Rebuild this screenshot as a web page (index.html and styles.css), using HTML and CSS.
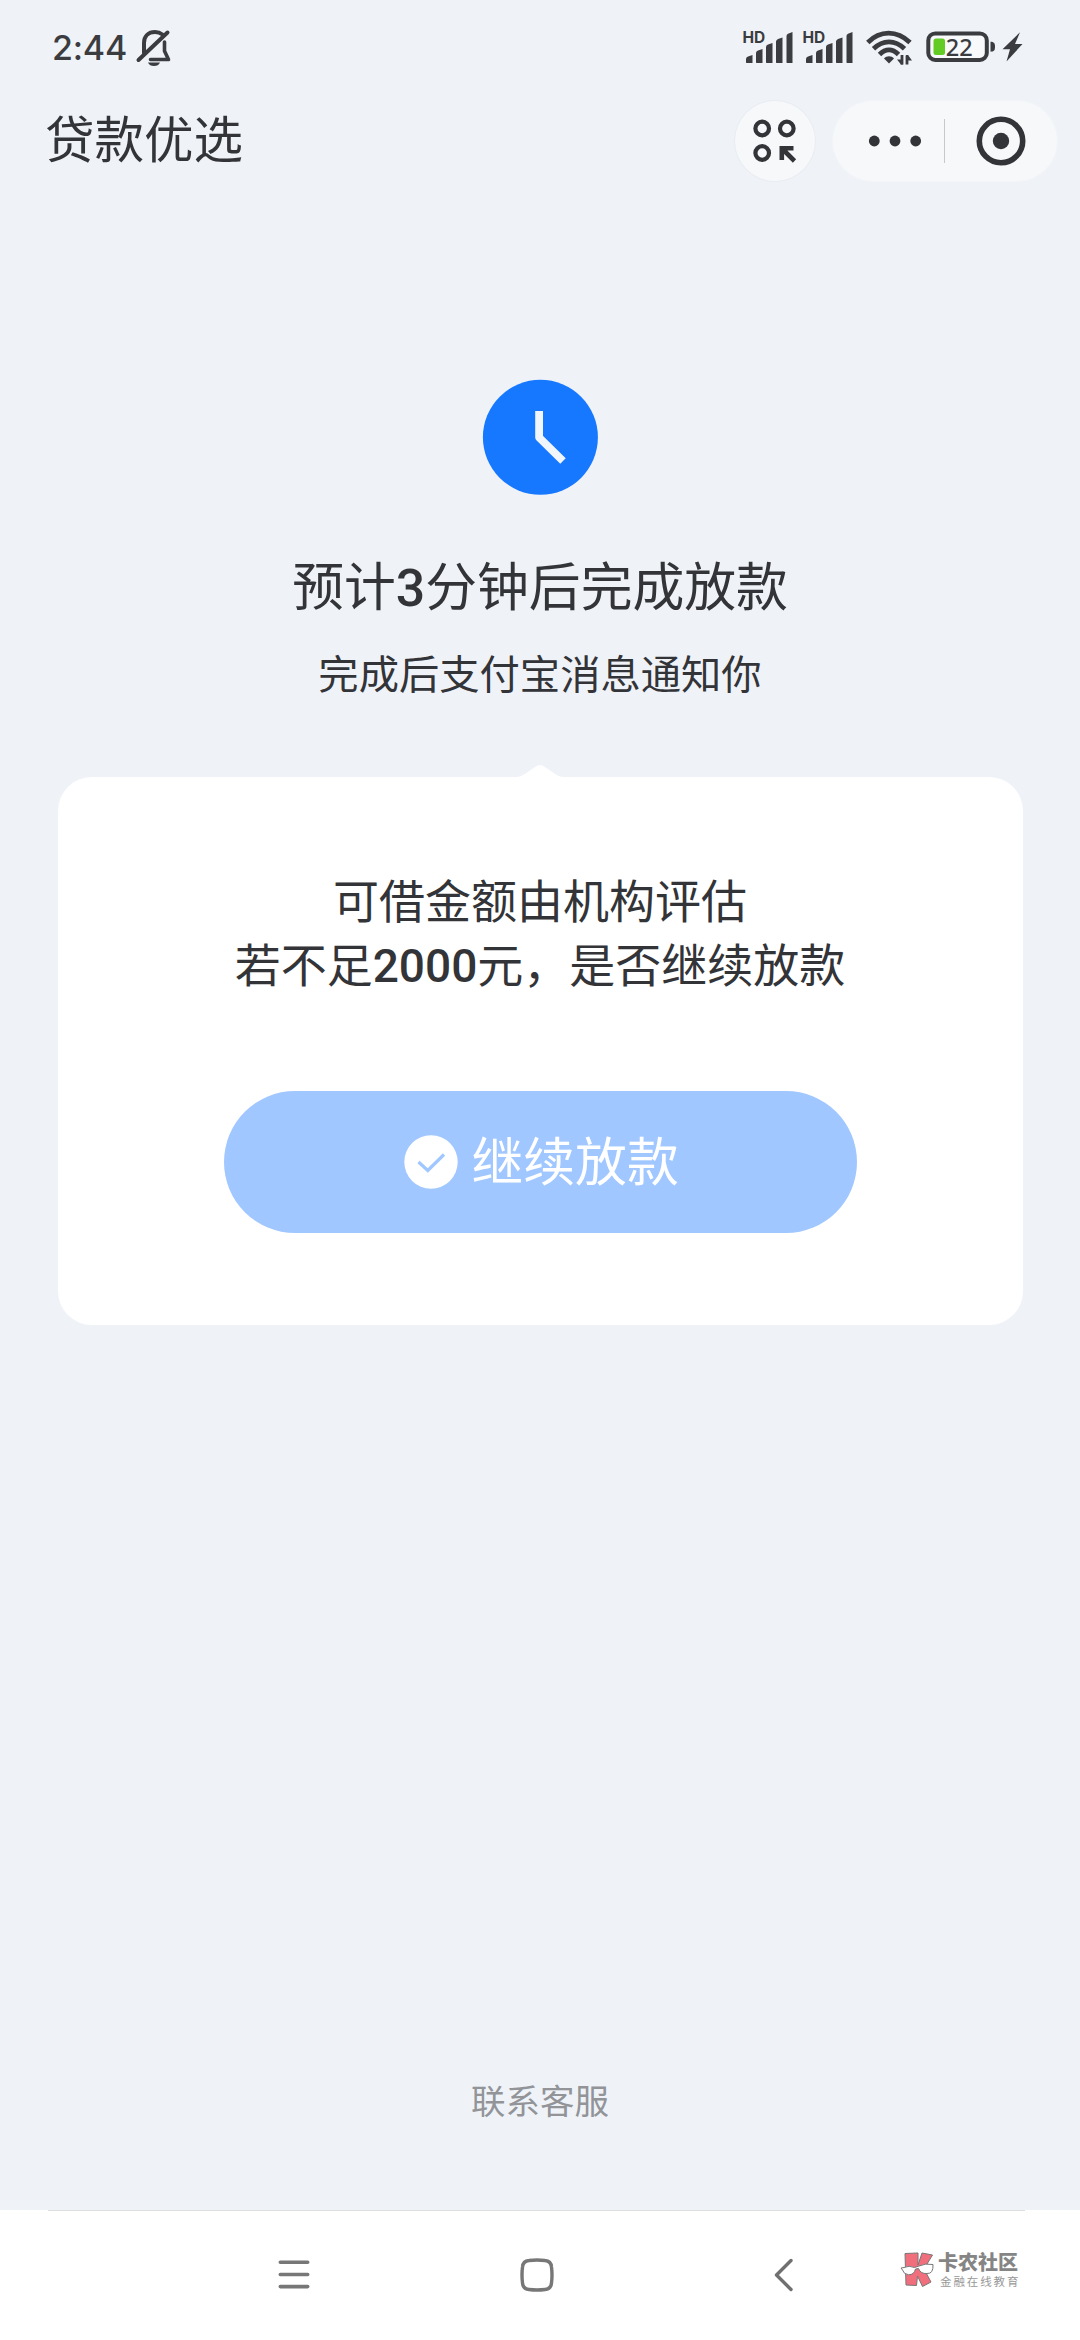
FILE: index.html
```html
<!DOCTYPE html>
<html lang="zh-CN">
<head>
<meta charset="utf-8">
<title>贷款优选</title>
<link rel="stylesheet" href="styles.css">
</head>
<body>
<div class="page">
  <div class="status-bar">
    <div class="status-left">
      <span class="clock">2:44</span>
      <svg class="bell" width="36" height="40" viewBox="0 0 36 40" fill="none" stroke="#3b3c40" stroke-width="4" stroke-linecap="round" stroke-linejoin="round">
        <path d="M8 25V15C8 8 12.500 4 19 4C22 4 24.500 5 26.500 6.500"/>
        <path d="M2.500 32L31.500 4.500"/>
        <path d="M28.500 14V23L32.500 31.500H14.500" stroke-width="3.600"/>
        <path d="M12 34.500H24C23 37 21 38 18 38S13 37 12 34.500Z" fill="#3b3c40" stroke="none"/>
      </svg>
    </div>
    <div class="status-right">
      <svg class="signal" width="50" height="36" viewBox="0 0 50 36" fill="#3b3c40">
        <text class="hd" x="-0.500" y="14">HD</text>
        <path d="M3 33.500V30Q3 28 5 27.500L9.500 26V34H3.500ZM13 33.500V24Q13 22 15 21.500L19.500 20V34H13.500ZM23 33.500V18Q23 16 25 15.500L29.500 14V34H23.500ZM33 33.500V12.500Q33 11 35 10L39.500 8.500V34H33.500ZM43.500 33.500V7Q43.500 5.500 45 4.800L49.500 3V34H44Z"/>
      </svg>
      <svg class="signal" width="50" height="36" viewBox="0 0 50 36" fill="#3b3c40">
        <text class="hd" x="-0.500" y="14">HD</text>
        <path d="M3 33.500V30Q3 28 5 27.500L9.500 26V34H3.500ZM13 33.500V24Q13 22 15 21.500L19.500 20V34H13.500ZM23 33.500V18Q23 16 25 15.500L29.500 14V34H23.500ZM33 33.500V12.500Q33 11 35 10L39.500 8.500V34H33.500ZM43.500 33.500V7Q43.500 5.500 45 4.800L49.500 3V34H44Z"/>
      </svg>
      <svg class="wifi" width="48" height="36" viewBox="0 0 48 36" fill="none" stroke="#3b3c40" stroke-width="4.800">
        <path d="M2.800 13.500C15 1 32 1 45 13.500"/>
        <path d="M8.500 19.800C18 10.500 30 10.500 39.500 19.800"/>
        <path d="M14.500 25.500C20.500 19.300 27.500 19.300 33.500 25.500"/>
        <path d="M19 29.500C21.500 26.500 26.500 26.500 29 29.500L24 34.500Z" fill="#3b3c40" stroke="none"/>
        <path d="M37 26V35.500M42 26.500V35.500" stroke-width="2.800"/>
        <path d="M38 35.500H36L32 30.500H37ZM41 26H43L47 31.500H42Z" fill="#3b3c40" stroke="none"/>
      </svg>
      <svg class="battery" width="70" height="32" viewBox="0 0 70 32">
        <rect x="3.300" y="3.400" width="58.500" height="26.600" rx="7" fill="#f7f9fb" stroke="#3b3c40" stroke-width="4"/>
        <rect x="8.500" y="8.500" width="11.500" height="16.500" rx="2.500" fill="#62cb24"/>
        <path d="M65.500 11.800C69 12 70 13 70 16.800S69 21.500 65.500 21.800Z" fill="#3b3c40"/>
        <text class="charge" x="20.800" y="25.500">22</text>
      </svg>
      <svg class="bolt" width="22" height="32" viewBox="0 0 22 32" fill="#3b3c40"><path d="M19 1.200L1.500 18.300H9L5.500 30.500L21.500 13H14Z"/></svg>
    </div>
  </div>

  <div class="title-bar">
    <h1 class="title">贷款优选</h1>
    <div class="actions">
      <div class="round-button">
        <svg width="44" height="44" viewBox="0 0 44 44" fill="none" stroke="#333438" stroke-width="4.200">
          <circle cx="9.200" cy="9.500" r="6.800"/><circle cx="33.800" cy="9.500" r="6.800"/><circle cx="9.200" cy="34" r="6.800"/>
          <path d="M28.800 41V29.300H40.500M29.500 30L41.500 42" stroke-width="4.600"/>
        </svg>
      </div>
      <div class="capsule">
        <svg width="54" height="12" viewBox="0 0 54 12" fill="#333438"><circle cx="6.300" cy="6" r="5.400"/><circle cx="27" cy="6" r="5.400"/><circle cx="47.700" cy="6" r="5.400"/></svg>
        <i class="split"></i>
        <svg width="50" height="50" viewBox="0 0 50 50"><circle cx="25" cy="25" r="21.700" fill="none" stroke="#333438" stroke-width="5.600"/><circle cx="25" cy="25" r="8.200" fill="#333438"/></svg>
      </div>
    </div>
  </div>

  <main class="content">
    <svg class="wait-icon" width="116" height="116" viewBox="0 0 116 116">
      <circle cx="58.400" cy="58.300" r="57.500" fill="#1677ff"/>
      <path d="M57.100 32V58.500L81 82" fill="none" stroke="#f0f6fb" stroke-width="7.800" stroke-linejoin="round"/>
    </svg>
    <h2 class="heading">预计<b>3</b>分钟后完成放款</h2>
    <p class="hint">完成后支付宝消息通知你</p>
    <svg class="tip" width="50" height="12" viewBox="0 0 50 12"><path d="M0 12C6 12 8 10 12 7.500L21 1.500Q25-1 29 1.500L38 7.500C42 10 44 12 50 12Z" fill="#fff"/></svg>
    <section class="card">
      <p class="question">可借金额由机构评估<br>若不足<b>2000</b>元，是否继续放款</p>
      <button class="confirm" type="button">
        <svg width="54" height="54" viewBox="0 0 54 54"><circle cx="27" cy="27" r="26.700" fill="#fff"/><path d="M14.500 27L23.800 35.500L40 19.500" fill="none" stroke="#a0c7ff" stroke-width="3.200"/></svg>
        <span>继续放款</span>
      </button>
    </section>
    <a class="service">联系客服</a>
  </main>

  <nav class="nav-bar">
    <svg class="menu" width="32" height="30" viewBox="0 0 32 30" stroke="#777" stroke-width="3.600" stroke-linecap="round"><path d="M2.300 3.300H29.700M2.300 15.500H29.700M2.300 27.600H29.700"/></svg>
    <svg class="home" width="34" height="34" viewBox="0 0 34 34"><path d="M9 2.500Q17 1.500 25 2.500Q31 3 31.500 9Q32.500 17 31.500 25Q31 31 25 31.500Q17 32.500 9 31.500Q3 31 2.500 25Q1.500 17 2.500 9Q3 3 9 2.500Z" fill="none" stroke="#777" stroke-width="3.400"/></svg>
    <svg class="back" width="20" height="34" viewBox="0 0 20 34" fill="none" stroke="#707070" stroke-width="3.400" stroke-linecap="round" stroke-linejoin="round"><path d="M17 2.500L2.500 17L17 31.500"/></svg>
    <div class="brand">
      <svg width="35" height="36" viewBox="0 0 35 36" stroke="#777" stroke-width="1" stroke-linejoin="round">
        <path d="M5 1.500L18 1V13L22 1L32.500 3L24 17L31 30L22.500 34.500L17.500 24L16.500 33.500L6 33Z" fill="#f16f7d"/>
        <path d="M1 16L4 15.500Q9 13 14.500 15.500L19 14Q25 11 33 12.500Q33.500 22 27 21.500Q20.500 22 18.500 16.500L15.500 17Q14 23 8.500 22.800Q3.500 22 2.500 18Z" fill="#fff"/>
      </svg>
      <div class="brand-text"><span class="brand-name">卡农社区</span><span class="brand-sub">金融在线教育</span></div>
    </div>
  </nav>
</div>
</body>
</html>
```
FILE: styles.css
```css
* { box-sizing: border-box; margin: 0; padding: 0; }
body { width: 1080px; background: #eff3f8; color: #333438; font-family: "Noto Sans CJK SC", sans-serif; }
svg { display: block; flex: none; overflow: visible; }
.page { display: flex; flex-direction: column; width: 1080px; height: 2340px; overflow: hidden; }
.status-bar { display: flex; justify-content: space-between; height: 94px; padding: 28px 57px 0 52px; }
.status-left, .status-right { display: flex; align-items: flex-start; }
.clock { width: 83px; font: 500 34px/40px Inter, sans-serif; letter-spacing: -0.2px; color: #3b3c40; white-space: nowrap; }
.bell { margin-left: 1px; }
.signal { margin: 1px 10px 0 0; }
.hd { font: 700 15.500px Inter, sans-serif; letter-spacing: 0; }
.wifi { margin: 1px 12px 0 2px; }
.battery { margin: 2px 6px 0 0; }
.charge { font: 500 23.500px "Noto Sans", sans-serif; fill: #3b3c40; }
.bolt { margin-top: 3px; }
.title-bar { display: flex; justify-content: space-between; align-items: center; height: 94px; padding: 0 23px 0 45px; }
.title { font-size: 49.500px; font-weight: 400; line-height: 60px; margin-top: -9px; }
.actions { display: flex; gap: 18px; }
.round-button, .capsule { display: flex; align-items: center; height: 80px; border-radius: 40px; background: #f7f8fa; box-shadow: 0 0 0 1px #e9ecf2; }
.round-button { width: 80px; justify-content: center; }
.capsule { width: 224px; padding-left: 35px; box-shadow: 0 0 0 1px #f2f4f8; }
.split { width: 1px; height: 44px; margin: 0 31px 0 22px; background: #c6c8cc; }
.content { display: flex; flex: 1; flex-direction: column; align-items: center; }
.wait-icon { margin-top: 191px; }
.heading { margin-top: 54px; font-size: 51.800px; font-weight: 400; line-height: 70px; }
.heading b { font: 500 51.800px/1 Roboto, sans-serif; }
.hint { margin-top: 25px; font-size: 40.300px; line-height: 56px; }
.tip { margin-top: 65px; }
.card { display: flex; flex-direction: column; align-items: center; width: 965px; height: 548px; padding-top: 89px; border-radius: 34px; background: #fff; }
.question { font-size: 46px; line-height: 64px; text-align: center; }
.question b { font: 500 46px/1 Roboto, sans-serif; }
.confirm { display: flex; align-items: center; gap: 14px; width: 633px; height: 142px; margin-top: 97px; padding-left: 180px; border: 0; border-radius: 71px; background: #a0c7ff; color: #fff; font: 400 51.800px/70px "Noto Sans CJK SC", sans-serif; }
.confirm span { margin-top: -7px; }
.service { margin-top: 749px; font-size: 34.500px; line-height: 50px; color: #929498; }
.nav-bar { display: flex; align-items: flex-start; height: 130px; padding: 48px 0 0 278px; background: linear-gradient(#dedede, #dedede) 48px 0 / 977px 1px no-repeat #fff; }
.menu { margin-top: 1px; }
.home { margin-left: 210px; }
.back { margin-left: 220px; }
.brand { display: flex; margin: -6px 0 0 106px; gap: 3px; }
.brand-text { display: flex; flex-direction: column; color: #858585; white-space: nowrap; }
.brand-name { font-size: 20px; font-weight: 900; line-height: 20px; }
.brand-sub { margin: 2px 0 0 2px; font-size: 11.500px; line-height: 14px; letter-spacing: 1.900px; color: #999; }
```
